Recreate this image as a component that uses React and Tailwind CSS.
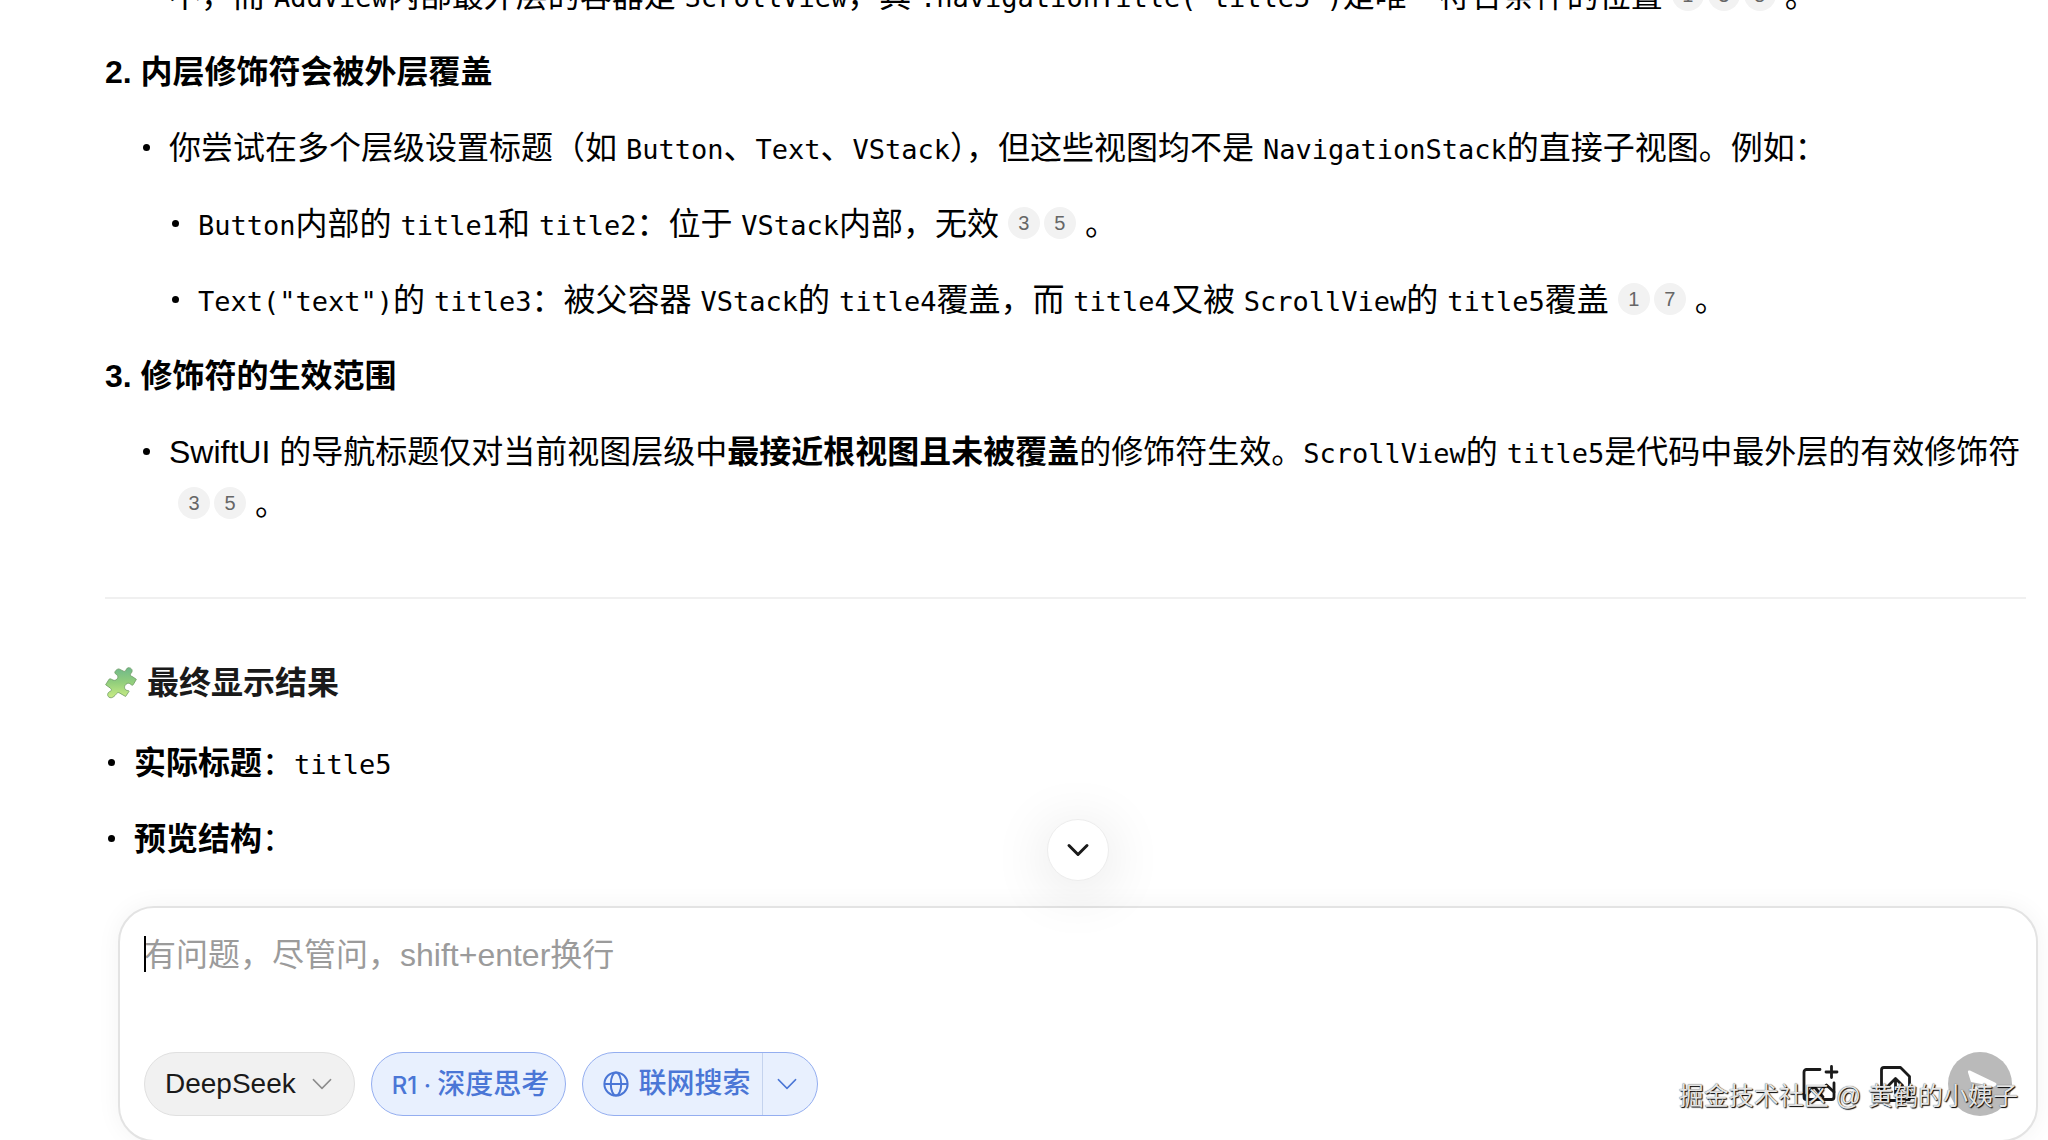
import { ChevronDown } from 'lucide-react';

function Code({ children }) {
  return <code className="font-['DejaVu_Sans_Mono','Noto_Sans_CJK_SC',monospace] text-[27px] leading-none">{children}</code>;
}

function Refs({ ids }) {
  return (
    <span className="mx-[9px] inline-flex gap-1 align-[5px]">
      {ids.map((id) => (
        <a
          key={id}
          href={`#ref-${id}`}
          className="flex h-8 w-8 items-center justify-center rounded-full bg-[#f2f2f2] text-xl leading-none text-[#666]"
        >
          {id}
        </a>
      ))}
    </span>
  );
}

function Item({ children }) {
  return (
    <li className="flex">
      <span className="flex h-[50px] w-[13px] shrink-0 items-center justify-center">
        <span className="h-[7px] w-[7px] rounded-full bg-black" />
      </span>
      <div className="min-w-0 flex-1 pl-4">{children}</div>
    </li>
  );
}

function PuzzleIcon() {
  return (
    <svg viewBox="28 28 101 101" className="h-8 w-8" aria-hidden="true">
      <defs>
        <linearGradient id="puzzle" x1="0" y1="0" x2="0" y2="1">
          <stop offset="0" stopColor="#6fb88a" />
          <stop offset="0.5" stopColor="#93cf7c" />
          <stop offset="1" stopColor="#c9ec84" />
        </linearGradient>
      </defs>
      <path
        d="M72 34L88 42C96 44 92 32 102 30C112 30 118 40 110 48C106 54 108 56 114 58L127 67L117 84C112 90 108 76 98 80C86 86 88 100 98 102C106 102 104 106 102 108L93 121L72 109C64 106 62 122 48 125C36 126 32 112 42 106C52 102 48 98 44 94L30 84L40 68C44 60 52 72 60 70C70 66 72 56 62 50C54 46 64 34 72 34Z"
        fill="url(#puzzle)"
        stroke="#6c9a62"
        strokeWidth="2.5"
      />
    </svg>
  );
}

function GlobeIcon() {
  return (
    <svg viewBox="0 0 26 26" className="h-[26px] w-[26px]" fill="none" stroke="currentColor" strokeWidth="2" aria-hidden="true">
      <circle cx="13" cy="13" r="11.6" />
      <ellipse cx="13" cy="13" rx="5.2" ry="11.6" />
      <path d="M1.4 13h23.2" />
    </svg>
  );
}

function ThinChevron() {
  return (
    <svg viewBox="0 0 22 12" className="h-3 w-5" fill="none" stroke="currentColor" strokeWidth="1.6" strokeLinecap="round" strokeLinejoin="round" aria-hidden="true">
      <path d="M1.5 1.2L11 10.8L20.5 1.2" />
    </svg>
  );
}

function AddImageIcon() {
  return (
    <svg viewBox="0 0 40 40" className="h-10 w-10" fill="none" stroke="currentColor" strokeWidth="2.8" strokeLinecap="round" strokeLinejoin="round" aria-hidden="true">
      <path d="M20 5.5H6.5A2.5 2.5 0 0 0 4 8V33a2.5 2.5 0 0 0 2.5 2.5H31.5A2.5 2.5 0 0 0 34 33V19" />
      <path d="M31.5 2.5V13.5M26 8H37" />
      <path d="M5 33L14 22.5L23 33M21 26L26.5 21L34 28" />
    </svg>
  );
}

function UploadIcon() {
  return (
    <svg viewBox="0 0 40 40" className="h-10 w-10" fill="none" stroke="currentColor" strokeWidth="2.8" strokeLinecap="round" strokeLinejoin="round" aria-hidden="true">
      <path d="M24.5 3.5H8A2.5 2.5 0 0 0 5.5 6V34A2.5 2.5 0 0 0 8 36.5H31A2.5 2.5 0 0 0 33.5 34V12.5Z" />
      <path d="M19.5 29V15M12.5 21.5L19.5 14.5L26.5 21.5" />
    </svg>
  );
}

function Answer() {
  return (
    <div className="-mt-[30px] pr-[22px] pl-[105px] text-[32px] leading-[52px] text-black">
      <ul className="pl-9">
        <li className="pl-7">
          不，而 <Code>AddView</Code>内部最外层的容器是 <Code>ScrollView</Code>，其 <Code>.navigationTitle("title5")</Code>
          是唯一符合条件的位置
          <Refs ids={[1, 3, 5]} />。
        </li>
      </ul>

      <h3 className="mt-6 font-bold">2. 内层修饰符会被外层覆盖</h3>
      <ul className="mt-6 space-y-6 pl-[35px]">
        <Item>
          <p>
            你尝试在多个层级设置标题（如 <Code>Button</Code>、<Code>Text</Code>、<Code>VStack</Code>），但这些视图均不是{' '}
            <Code>NavigationStack</Code>的直接子视图。例如：
          </p>
          <ul className="mt-6 space-y-6">
            <Item>
              <Code>Button</Code>内部的 <Code>title1</Code>和 <Code>title2</Code>：位于 <Code>VStack</Code>内部，无效
              <Refs ids={[3, 5]} />。
            </Item>
            <Item>
              <Code>Text("text")</Code>的 <Code>title3</Code>：被父容器 <Code>VStack</Code>的 <Code>title4</Code>覆盖，而{' '}
              <Code>title4</Code>又被 <Code>ScrollView</Code>的 <Code>title5</Code>覆盖
              <Refs ids={[1, 7]} />。
            </Item>
          </ul>
        </Item>
      </ul>

      <h3 className="mt-6 font-bold">3. 修饰符的生效范围</h3>
      <ul className="mt-6 pl-[35px]">
        <Item>
          SwiftUI 的导航标题仅对当前视图层级中<strong>最接近根视图且未被覆盖</strong>的修饰符生效。<Code>ScrollView</Code>的{' '}
          <Code>title5</Code>是代码中最外层的有效修饰符
          <Refs ids={[3, 5]} />。
        </Item>
      </ul>

      <hr className="mt-[67px] border-t-2 border-[#f0f0f0]" />

      <h3 className="mt-[58px] flex items-center gap-[10px] font-bold text-[#1a1a1a]">
        <PuzzleIcon />
        最终显示结果
      </h3>
      <ul className="mt-7 space-y-6">
        <Item>
          <strong>实际标题</strong>：<Code>title5</Code>
        </Item>
        <Item>
          <strong>预览结构</strong>：
        </Item>
      </ul>
    </div>
  );
}

function Composer() {
  return (
    <div className="relative mr-[10px] -mb-[2px] ml-[118px] rounded-[36px] border-2 border-[#e3e3e3] bg-white px-6 pt-[22px] pb-6 shadow-[0_0_24px_rgba(0,0,0,0.05)]">
      <div className="pointer-events-none absolute inset-x-0 -top-[89px] flex justify-center">
        <button
          type="button"
          aria-label="滚动到底部"
          className="pointer-events-auto flex h-[62px] w-[62px] items-center justify-center rounded-full border border-[#ededed] bg-white text-[#1a1a1a] shadow-[0_8px_60px_rgba(0,0,0,0.12)]"
        >
          <ChevronDown size={36} strokeWidth={2} />
        </button>
      </div>

      <div className="relative">
        <span className="absolute top-[6px] left-0 h-9 w-[2px] bg-black" />
        <textarea
          rows={2}
          aria-label="提问"
          placeholder="有问题，尽管问，shift+enter换行"
          className="block h-[122px] w-full resize-none bg-transparent text-[32px] leading-[50px] outline-none placeholder:text-[#9b9b9b]"
        />
      </div>

      <div className="flex items-center justify-between">
        <div className="flex gap-4 text-[28px]">
          <button type="button" className="flex h-16 items-center gap-4 rounded-full border border-[#e0e0e0] bg-[#f1f1f1] px-5 font-medium text-[#1a1a1a]">
            DeepSeek
            <span className="pr-[2px] text-[#8c8c8c]">
              <ThinChevron />
            </span>
          </button>
          <button type="button" className="flex h-16 items-center rounded-full border border-[#94aef0] bg-[#e8f0fe] pr-4 pl-5 text-[#4a76d6]">
            <span className="font-['Inter','Noto_Sans_CJK_SC',sans-serif] font-medium">
              <span className="text-2xl">R1 · </span>深度思考
            </span>
          </button>
          <div className="flex h-16 rounded-full border border-[#94aef0] bg-[#e8f0fe] font-medium text-[#4a76d6]">
            <button type="button" className="flex items-center gap-[9px] pr-3 pl-5">
              <GlobeIcon />
              联网搜索
            </button>
            <button type="button" aria-label="搜索选项" className="flex items-center border-l border-[#c4d3ee] pr-5 pl-[14px]">
              <ThinChevron />
            </button>
          </div>
        </div>

        <div className="relative flex items-center text-[#1a1a1a]">
          <button type="button" aria-label="添加图片" className="mr-9">
            <AddImageIcon />
          </button>
          <button type="button" aria-label="上传文件" className="mr-8">
            <UploadIcon />
          </button>
          <button type="button" aria-label="发送" className="flex h-16 w-16 items-center justify-center rounded-full bg-[#bababa]">
            <svg viewBox="0 0 64 64" className="h-16 w-16" fill="#fff" aria-hidden="true">
              <path d="M20 20.5C19.5 18.5 21 18 23 19L47 30.5C49 31.5 49 33 47 34L24 45.5C22 46.5 20.5 45.5 21 43.5L23.5 35.5L36 32.5L23 30Z" />
            </svg>
          </button>
          <span className="pointer-events-none absolute -right-[6px] bottom-px text-[25px] leading-[38px] whitespace-nowrap text-[#e4e4e4] [text-shadow:1px_1px_1px_#000,0_0_1px_#444]">
            掘金技术社区 @ 黄鹤的小姨子
          </span>
        </div>
      </div>
    </div>
  );
}

export default function App() {
  return (
    <div className="flex h-screen flex-col overflow-hidden bg-white font-['Liberation_Sans','Noto_Sans_CJK_SC',sans-serif]">
      <main className="min-h-0 flex-1 overflow-hidden">
        <Answer />
      </main>
      <Composer />
    </div>
  );
}
